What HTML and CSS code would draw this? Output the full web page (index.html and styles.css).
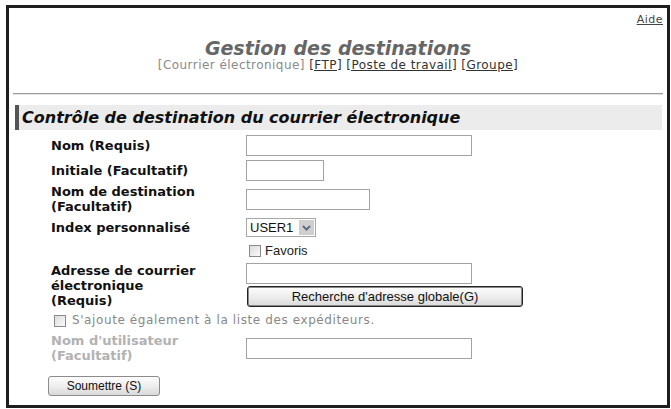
FILE: index.html
```
<!DOCTYPE html>
<html lang="fr">
<head>
<meta charset="utf-8">
<title>Gestion des destinations</title>
<link rel="stylesheet" href="styles.css">
</head>
<body>
<div class="frame">
  <div class="top"><a class="help" href="#">Aide</a></div>
  <h1 class="title">Gestion des destinations</h1>
  <div class="tabs"><span class="cur">[Courrier électronique]</span> <a href="#">[FTP]</a> <a href="#">[Poste de travail]</a> <a href="#">[Groupe]</a></div>
  <hr class="sep">
  <h2 class="section">Contrôle de destination du courrier électronique</h2>
  <div class="form">
    <div class="row r1">
      <label class="lbl">Nom (Requis)</label>
      <div class="ctl"><input class="txt w-long" type="text"></div>
    </div>
    <div class="row r2">
      <label class="lbl">Initiale (Facultatif)</label>
      <div class="ctl"><input class="txt w-short" type="text"></div>
    </div>
    <div class="row r3">
      <label class="lbl">Nom de destination<br>(Facultatif)</label>
      <div class="ctl"><input class="txt w-mid" type="text"></div>
    </div>
    <div class="row r4">
      <label class="lbl">Index personnalisé</label>
      <div class="ctl">
        <div class="sel"><span class="sel-val">USER1</span><span class="sel-arrow"><svg width="9" height="6" viewBox="0 0 9 6"><path d="M1 1 L4.5 4.6 L8 1" fill="none" stroke="#56677d" stroke-width="1.8"/></svg></span></div>
      </div>
    </div>
    <div class="row r5">
      <span class="lbl"></span>
      <div class="ctl"><label class="check"><input class="cb" type="checkbox">Favoris</label></div>
    </div>
    <div class="row r6">
      <label class="lbl">Adresse de courrier<br>électronique<br>(Requis)</label>
      <div class="ctl stack">
        <input class="txt w-long" type="text">
        <button class="btn btn-global" type="button">Recherche d'adresse globale(G)</button>
      </div>
    </div>
    <div class="row r7 addrow">
      <input class="cb" type="checkbox"><span>S'ajoute également à la liste des expéditeurs.</span>
    </div>
    <div class="row r8">
      <label class="lbl muted">Nom d'utilisateur<br>(Facultatif)</label>
      <div class="ctl"><input class="txt w-long" type="text"></div>
    </div>
    <div class="row r9">
      <button class="btn btn-submit" type="button">Soumettre (S)</button>
    </div>
  </div>
</div>
</body>
</html>
```
FILE: styles.css
```
body {
  margin: 0;
  background: #fff;
  font-family: "DejaVu Sans", Verdana, sans-serif;
  color: #111;
}

.frame {
  margin: 5px 0 0 6px;
  width: 650px;
  height: 397px;
  padding: 0 4px;
  border: 3px solid #1e1e1e;
  overflow: hidden;
}

.top {
  padding-top: 5px;
  text-align: right;
  font-size: 11px;
  line-height: 14px;
  letter-spacing: 0.5px;
}

.help {
  color: #444;
  text-decoration: underline;
}

.title {
  margin: 14px 0 0;
  font-size: 19px;
  line-height: 15px;
  font-weight: bold;
  font-style: italic;
  color: #666;
  text-align: center;
}

.tabs {
  margin-top: 3px;
  font-size: 12px;
  line-height: 12px;
  letter-spacing: 0.45px;
  text-align: center;
  color: #8a8a8a;
}

.tabs a {
  color: #333;
  text-decoration: underline;
}

.sep {
  margin: 22px 0 0;
  height: 0;
  border: 0;
  border-top: 1px solid #9c9c9c;
  border-bottom: 1px solid #e2e2e2;
}

.section {
  margin: 10px 1px 0 2px;
  padding-left: 3px;
  background: #ececec;
  border-left: 4px solid #555;
  font-size: 16px;
  line-height: 25px;
  font-weight: bold;
  font-style: italic;
  color: #111;
}

.row {
  display: flex;
  align-items: center;
}

.r1 { margin-top: 5px; }
.r2 { margin-top: 4px; }
.r3 { margin-top: 3px; }
.r4 { margin-top: 4px; }
.r5 { margin-top: 6px; }
.r6 { margin-top: 5px; align-items: flex-start; }
.r7 { margin-top: 5px; }
.r8 { margin-top: 5px; }
.r9 { margin-top: 13px; }

.lbl {
  flex: none;
  width: 195px;
  padding-left: 38px;
  font-size: 13px;
  line-height: 15px;
  font-weight: bold;
  color: #111;
}

.lbl.muted {
  color: #b2b2b2;
}

.ctl {
  display: flex;
}

.stack {
  flex-direction: column;
  gap: 2px;
}

.txt {
  display: block;
  box-sizing: border-box;
  height: 21px;
  margin: 0;
  padding: 0 2px;
  border: 1px solid #a3a3a3;
  background: #fff;
}

.w-long { width: 226px; }
.w-short { width: 78px; }
.w-mid { width: 124px; }

.sel {
  box-sizing: border-box;
  display: flex;
  align-items: center;
  width: 70px;
  height: 19px;
  padding-left: 3px;
  border: 1px solid #a8a8a8;
  font-family: "Liberation Sans", Arial, sans-serif;
  font-size: 13px;
  color: #111;
}

.sel-arrow {
  display: flex;
  align-items: center;
  justify-content: center;
  width: 15px;
  height: 15px;
  margin-left: auto;
  margin-right: 1px;
  background: #cfcfcf;
}

.check {
  display: flex;
  align-items: center;
  gap: 4px;
  margin-left: 3px;
  font-family: "Liberation Sans", Arial, sans-serif;
  font-size: 13px;
  line-height: 15px;
  color: #222;
}

.cb {
  -webkit-appearance: none;
  appearance: none;
  box-sizing: border-box;
  width: 12px;
  height: 12px;
  margin: 0;
  border: 1px solid #8a8a8a;
  background: linear-gradient(135deg, #dcdcdc, #fafafa);
}

.addrow {
  gap: 6px;
  padding-left: 41px;
  font-size: 12px;
  line-height: 15px;
  letter-spacing: 0.6px;
  color: #888;
}

.btn {
  box-sizing: border-box;
  padding: 0;
  font-family: "Liberation Sans", Arial, sans-serif;
  color: #111;
  border-radius: 3px;
  background: linear-gradient(#fdfdfd, #ececec 55%, #d9d9d9);
}

.btn-global {
  width: 276px;
  height: 21px;
  margin-left: 1px;
  font-size: 13px;
  border: 1px solid #222;
  box-shadow: inset 0 0 0 1px #8a8a8a;
}

.btn-submit {
  width: 112px;
  height: 20px;
  margin-left: 35px;
  font-size: 12px;
  border: 1px solid #8c8c8c;
}
```
